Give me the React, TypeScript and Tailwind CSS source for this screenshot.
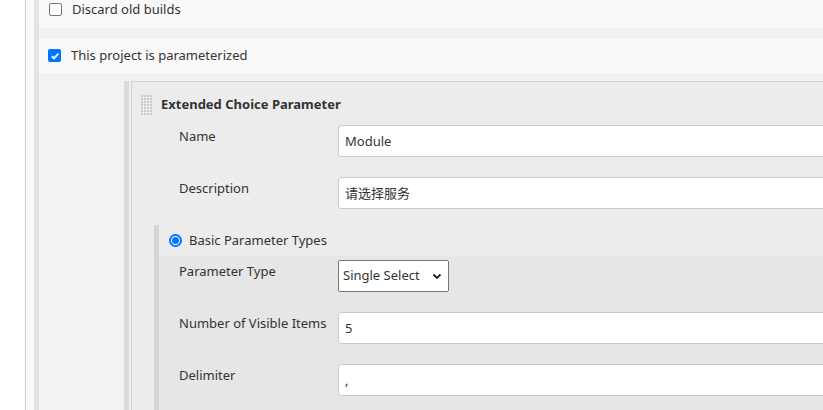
import { ReactNode } from 'react';

const font = "font-['Noto_Sans','Noto_Sans_CJK_SC',sans-serif]";

function Checkbox({ checked }: { checked?: boolean }) {
  if (checked) {
    return (
      <span className="flex h-[13px] w-[13px] shrink-0 items-center justify-center rounded-[2px] bg-[#0075ff]">
        <svg width="10" height="10" viewBox="0 0 10 10">
          <path d="M1.8 5.2 L4 7.3 L8.3 2.6" fill="none" stroke="#fff" strokeWidth="1.9" />
        </svg>
      </span>
    );
  }
  return <span className="h-[13px] w-[13px] shrink-0 rounded-[2px] border border-[#767676] bg-white" />;
}

function Grip() {
  return (
    <div className="grid grid-cols-4 gap-[1px] py-[1px]">
      {Array.from({ length: 28 }).map((_, i) => (
        <span key={i} className="h-[2px] w-[2px] bg-[#c9c9c9]" />
      ))}
    </div>
  );
}

function FieldRow({ label, children }: { label: string; children: ReactNode }) {
  return (
    <div className="flex items-start">
      <div className="w-[159px] shrink-0 pt-[2px] leading-[18px]">{label}</div>
      {children}
    </div>
  );
}

function TextInput({ value }: { value: string }) {
  return (
    <div className="flex h-[32px] flex-1 items-center rounded-[3px] border border-[#cbcbcb] bg-white pl-[6px] pt-[1px]">
      {value}
    </div>
  );
}

export default function App() {
  return (
    <div className={`h-[410px] w-[823px] overflow-hidden bg-white text-[13px] text-[#333] ${font}`}>
      <div className="ml-[25px] h-full border-l border-[#cfcfcf] bg-[#fafafa] pl-[8px]">
        <div className="h-full border-l-[5px] border-[#e3e3e3] bg-[#f2f2f2]">
          <div className="h-[28px] bg-[#f9f9f9]">
            <div className="flex h-[19px] items-center gap-[10px] pl-[10px]">
              <Checkbox />
              <span>Discard old builds</span>
            </div>
          </div>
          <div className="mt-[11px] flex h-[34px] items-center gap-[10px] bg-[#f9f9f9] pb-[1px] pl-[9px]">
            <Checkbox checked />
            <span>This project is parameterized</span>
          </div>

          <div className="flex pt-[8px]">
            <div className="w-[85px] shrink-0" />
            <div className="flex flex-1 border-l-[5px] border-[#dadada] bg-[#f0f0f0] pl-[2px]">
              <div className="mr-[-20px] flex-1 border-l border-t border-[#d0d0d0] bg-[#ececec]">
                <div className="flex items-center gap-[9px] pl-[9px] pt-[12px]">
                  <Grip />
                  <span className="font-bold">Extended Choice Parameter</span>
                </div>
                <div className="mt-[9px] flex flex-col gap-[20px] pl-[47px]">
                  <FieldRow label="Name">
                    <TextInput value="Module" />
                  </FieldRow>
                  <FieldRow label="Description">
                    <TextInput value="请选择服务" />
                  </FieldRow>
                </div>

                <div className="ml-[22px] mt-[16px] border-l-[5px] border-[#d5d5d5]">
                  <div className="flex h-[31px] items-center gap-[7px] bg-[#ececec] pl-[10px]">
                    <span className="flex h-[13px] w-[13px] items-center justify-center rounded-full border-[2px] border-[#0075ff] bg-white">
                      <span className="h-[7px] w-[7px] rounded-full bg-[#0075ff]" />
                    </span>
                    <span>Basic Parameter Types</span>
                  </div>
                  <div className="flex flex-col gap-[20px] bg-[#e6e6e6] pb-[20px] pl-[20px] pt-[4px]">
                    <FieldRow label="Parameter Type">
                      <div className="flex h-[32px] w-[111px] items-center justify-between rounded-[2px] border border-[#767676] bg-white pl-[4px] pr-[6px]">
                        <span>Single Select</span>
                        <svg width="10" height="10" viewBox="0 0 10 10">
                          <path d="M1.5 3.5 L5 7 L8.5 3.5" fill="none" stroke="#222" strokeWidth="1.8" />
                        </svg>
                      </div>
                    </FieldRow>
                    <FieldRow label="Number of Visible Items">
                      <TextInput value="5" />
                    </FieldRow>
                    <FieldRow label="Delimiter">
                      <TextInput value="," />
                    </FieldRow>
                  </div>
                </div>
              </div>
            </div>
          </div>
        </div>
      </div>
    </div>
  );
}
